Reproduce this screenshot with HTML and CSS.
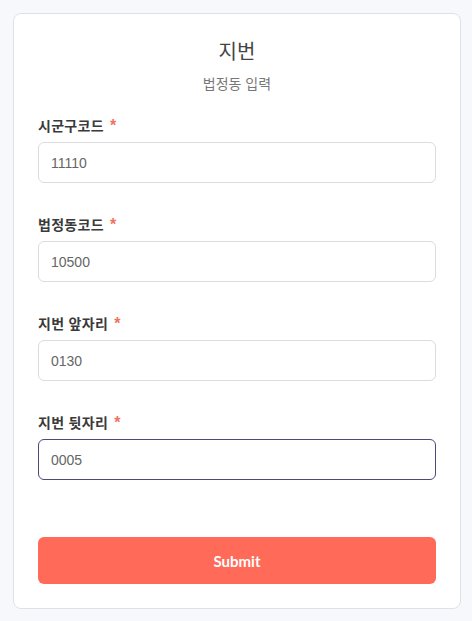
FILE: index.html
```html
<!DOCTYPE html>
<html lang="ko">
<head>
<meta charset="utf-8">
<link rel="stylesheet" href="styles.css">
</head>
<body>
<form class="card">
  <div class="header">
    <h1 class="title">지번</h1>
    <p class="subtitle">법정동 입력</p>
  </div>
  <div class="field">
    <label class="label">시군구코드 <span class="req">*</span></label>
    <input class="input" type="text" value="11110">
  </div>
  <div class="field">
    <label class="label">법정동코드 <span class="req">*</span></label>
    <input class="input" type="text" value="10500">
  </div>
  <div class="field">
    <label class="label">지번 앞자리 <span class="req">*</span></label>
    <input class="input" type="text" value="0130">
  </div>
  <div class="field">
    <label class="label">지번 뒷자리 <span class="req">*</span></label>
    <input class="input focused" type="text" value="0005">
  </div>
  <button class="submit" type="button">Submit</button>
</form>
</body>
</html>
```
FILE: styles.css
```css
html, body {
  margin: 0;
  padding: 0;
  background: #f7f8fc;
  font-family: "Liberation Sans", "Noto Sans CJK KR", sans-serif;
}
body {
  padding: 13px 11px 12px 13px;
}
.card {
  background: #fff;
  border: 1px solid #dfe1ea;
  border-radius: 8px;
  padding: 24px 24px 24px 24px;
  display: flex;
  flex-direction: column;
}
.header {
  text-align: center;
  margin-bottom: 22px;
}
.title {
  margin: 0;
  font-size: 20px;
  line-height: 28px;
  font-weight: 400;
  color: #444;
}
.subtitle {
  margin: 8px 0 0;
  font-size: 14px;
  line-height: 20px;
  color: #777;
}
.field {
  display: flex;
  flex-direction: column;
  gap: 6px;
  margin-bottom: 32px;
}
.label {
  font-size: 14px;
  line-height: 20px;
  font-weight: 700;
  color: #3a3a3a;
  letter-spacing: 0.3px;
}
.req {
  color: #f0725f;
  font-size: 16px;
  line-height: 14px;
  margin-left: 2px;
}
.input {
  box-sizing: border-box;
  height: 41px;
  border: 1px solid #dcdcdf;
  border-radius: 6px;
  padding: 0 12px;
  font-family: "Liberation Sans", sans-serif;
  font-size: 14px;
  color: #666;
  background: #fff;
  outline: none;
}
.input.focused {
  border-color: #4b4a78;
}
.submit {
  margin-top: 25px;
  height: 47px;
  border: none;
  border-radius: 6px;
  background: #ff6b58;
  color: #fff;
  font-family: Lato, sans-serif;
  font-weight: 700;
  font-size: 15px;
}
```
